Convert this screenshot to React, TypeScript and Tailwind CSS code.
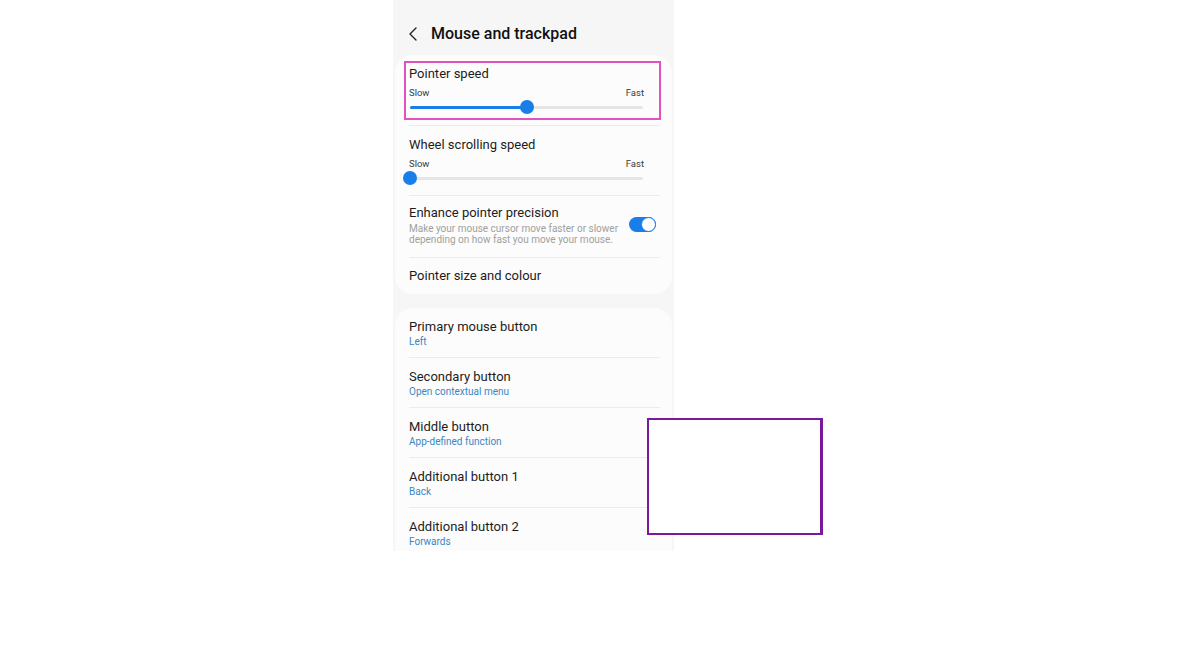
import React from 'react';

const font = { fontFamily: 'Roboto, "Noto Sans", sans-serif' };

const Slider: React.FC<{ value: number }> = ({ value }) => (
    <div className="relative h-[14px] mx-[1px] flex items-center">
        <div className="h-[3px] w-full rounded-full bg-[#e6e6e6]" />
        <div className="absolute left-0 h-[3px] rounded-full bg-[#1a7ee8]" style={{ width: `${value}%` }} />
        <div
            className="absolute w-[14px] h-[14px] rounded-full bg-[#1a7ee8] -translate-x-1/2"
            style={{ left: `${value}%` }}
        />
    </div>
);

const SpeedItem: React.FC<{ title: string; value: number; h: string }> = ({ title, value, h }) => (
    <div className={`pt-[11px] pr-[16px] ${h}`}>
        <div className="text-[13px] leading-[16px] text-[#1c1c1c]">{title}</div>
        <div className="mt-[6px] flex justify-between text-[9.5px] leading-[10px] text-[#3a3a3a]">
            <span>Slow</span>
            <span>Fast</span>
        </div>
        <div className="mt-[2px]">
            <Slider value={value} />
        </div>
    </div>
);

const Divider = () => <div className="h-px bg-[#ececec]" />;

const ButtonRow: React.FC<{ title: string; value: string; last?: boolean }> = ({ title, value, last }) => (
    <>
        <div className="h-[49px] pt-[11px]">
            <div className="text-[13px] leading-[16px] text-[#1c1c1c]">{title}</div>
            <div className="mt-[1px] text-[10px] leading-[11px] text-[#3a86c4]">{value}</div>
        </div>
        {!last && <Divider />}
    </>
);

const App: React.FC = () => {
    return (
        <div className="w-[1200px] h-[664px] bg-white relative overflow-hidden" style={font}>
            <div className="ml-[393px] w-[281px] h-[551px] bg-[#f6f6f6] overflow-hidden flex flex-col">
                {/* Header */}
                <div className="h-[55px] shrink-0 flex items-start pt-[24px] pl-[15px]">
                    <svg width="10" height="14" viewBox="0 0 10 14" fill="none" className="mt-[3px]">
                        <path d="M8 1 L2 7 L8 13" stroke="#222" strokeWidth="1.4" strokeLinecap="round" strokeLinejoin="round" />
                    </svg>
                    <span className="ml-[13px] text-[16px] leading-[20px] font-medium text-[#111]">Mouse and trackpad</span>
                </div>

                {/* Card 1 */}
                <div className="mx-[2px] rounded-[18px] bg-[#fcfcfc] pl-[14px] pr-[12px] shrink-0">
                    <SpeedItem title="Pointer speed" value={50} h="h-[70px]" />
                    <Divider />
                    <SpeedItem title="Wheel scrolling speed" value={0} h="h-[69px]" />
                    <Divider />
                    <div className="h-[61px] pt-[9px] flex items-start">
                        <div className="flex-1">
                            <div className="text-[13px] leading-[16px] text-[#1c1c1c]">Enhance pointer precision</div>
                            <div className="mt-[2px] text-[10px] leading-[11px] text-[#a0a0a0]">
                                Make your mouse cursor move faster or slower
                                <br />
                                depending on how fast you move your mouse.
                            </div>
                        </div>
                        <div className="mt-[12px] mr-[4px] w-[27px] h-[15px] rounded-full bg-[#1a7ee8] flex items-center justify-end">
                            <div className="w-[15px] h-[15px] rounded-full bg-white border-[1.5px] border-[#1a7ee8]" />
                        </div>
                    </div>
                    <Divider />
                    <div className="h-[36px] pt-[10px]">
                        <div className="text-[13px] leading-[16px] text-[#1c1c1c]">Pointer size and colour</div>
                    </div>
                </div>

                {/* Card 2 */}
                <div className="mt-[14px] mx-[2px] rounded-t-[18px] bg-[#fcfcfc] pl-[14px] pr-[12px] flex-1">
                    <ButtonRow title="Primary mouse button" value="Left" />
                    <ButtonRow title="Secondary button" value="Open contextual menu" />
                    <ButtonRow title="Middle button" value="App-defined function" />
                    <ButtonRow title="Additional button 1" value="Back" />
                    <ButtonRow title="Additional button 2" value="Forwards" last />
                </div>
            </div>

            {/* Highlight annotations */}
            <div className="absolute left-[404px] top-[61px] w-[257px] h-[59px] border-2 border-[#e052c0]" />
            <div className="absolute left-[647px] top-[418px] w-[176px] h-[117px] bg-white border-2 border-r-[3px] border-[#7a1a9a]" />
        </div>
    );
};

export default App;
